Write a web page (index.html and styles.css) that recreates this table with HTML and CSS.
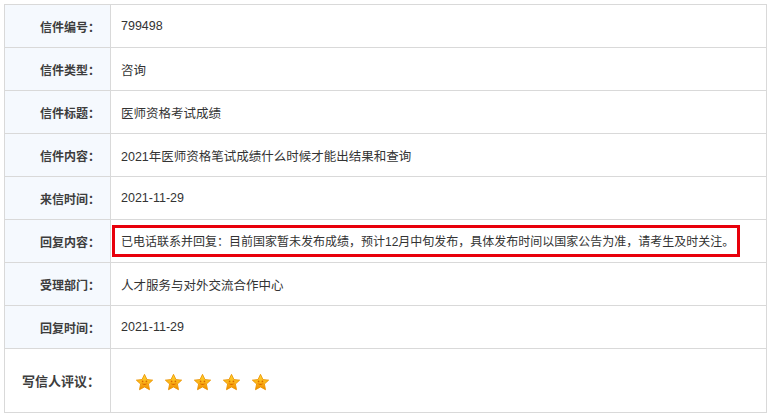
FILE: index.html
```html
<!DOCTYPE html>
<html lang="zh-CN">
<head>
  <meta charset="UTF-8" />
  <title>信件详情</title>
  <link rel="stylesheet" href="styles.css">
</head>
<body>
  <svg class="defs" width="0" height="0">
    <defs>
      <linearGradient id="starFill" x1="0" y1="0" x2="0" y2="1">
        <stop offset="0" stop-color="#ffd735"/>
        <stop offset="0.55" stop-color="#fbb316"/>
        <stop offset="1" stop-color="#f08a00"/>
      </linearGradient>
      <symbol id="star" viewBox="0 0 20 20">
        <path d="M10 1.4 L12.6 6.9 L18.6 7.5 L14.1 11.6 L15.3 17.6 L10 14.7 L4.7 17.6 L5.9 11.6 L1.4 7.5 L7.4 6.9 Z" fill="url(#starFill)" stroke="#eb9300" stroke-width="0.9" stroke-linejoin="round"/>
        <path d="M6.4 10.4 Q10 14.6 13.6 10.4 Q10 12.2 6.4 10.4 Z" fill="#d96a00"/>
        <circle cx="8" cy="8.9" r="0.9" fill="#d96a00"/>
        <circle cx="12" cy="8.9" r="0.9" fill="#d96a00"/>
      </symbol>
    </defs>
  </svg>

  <table class="letter">
    <tr>
      <th>信件编号：</th>
      <td>799498</td>
    </tr>
    <tr>
      <th>信件类型：</th>
      <td>咨询</td>
    </tr>
    <tr>
      <th>信件标题：</th>
      <td>医师资格考试成绩</td>
    </tr>
    <tr>
      <th>信件内容：</th>
      <td>2021年医师资格笔试成绩什么时候才能出结果和查询</td>
    </tr>
    <tr>
      <th>来信时间：</th>
      <td>2021-11-29</td>
    </tr>
    <tr>
      <th>回复内容：</th>
      <td><span class="reply">已电话联系并回复：目前国家暂未发布成绩，预计12月中旬发布，具体发布时间以国家公告为准，请考生及时关注。</span></td>
    </tr>
    <tr>
      <th>受理部门：</th>
      <td>人才服务与对外交流合作中心</td>
    </tr>
    <tr>
      <th>回复时间：</th>
      <td>2021-11-29</td>
    </tr>
    <tr class="rating-row">
      <th>写信人评议：</th>
      <td>
        <div class="stars">
          <svg class="star"><use href="#star"/></svg>
          <svg class="star"><use href="#star"/></svg>
          <svg class="star"><use href="#star"/></svg>
          <svg class="star"><use href="#star"/></svg>
          <svg class="star"><use href="#star"/></svg>
        </div>
      </td>
    </tr>
  </table>
</body>
</html>
```

FILE: styles.css
```css
body {
  margin: 0;
  padding: 4px;
  background-color: #ffffff;
  font-family: "Liberation Sans", "Noto Sans CJK SC", sans-serif;
  font-size: 12.5px;
  color: #333;
}

.defs {
  position: absolute;
}

.letter {
  width: 763px;
  border-collapse: collapse;
}

.letter th,
.letter td {
  border: 1px solid #d9d9d9;
  height: 42px;
  padding: 0;
  vertical-align: middle;
}

.letter th {
  width: 95px;
  padding-right: 10px;
  text-align: right;
  font-size: 12px;
  font-weight: bold;
  color: #3d3d3d;
  background-color: #f5f9fe;
}

.letter td {
  padding-left: 10px;
  text-align: left;
}

.reply {
  display: inline-block;
  margin-left: -9px;
  padding: 4px 3px 5px 6px;
  border: 3px solid #e8000b;
  font-size: 12px;
}

.rating-row th,
.rating-row td {
  height: 63px;
}

.rating-row th {
  font-size: 13px;
  background-color: #ffffff;
}

.stars {
  display: flex;
  gap: 10px;
  padding-left: 14px;
  padding-top: 3px;
}

.star {
  width: 19px;
  height: 19px;
}
```
